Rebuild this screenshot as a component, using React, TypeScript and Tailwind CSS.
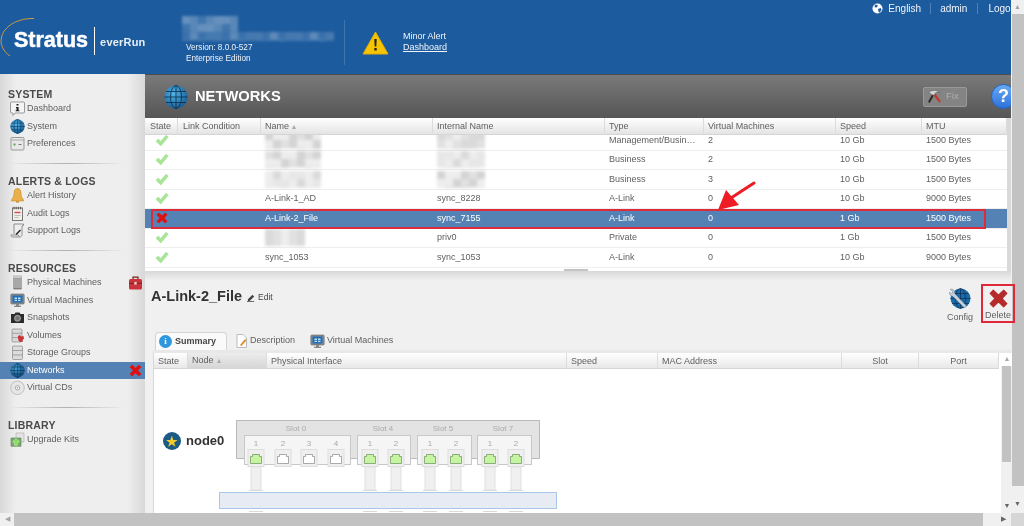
import type { ReactNode } from "react"

const font = "font-['Liberation_Sans',Arial,sans-serif]"

function Globe({ size = 15, dark = false }: { size?: number; dark?: boolean }) {
  return (
    <svg width={size} height={size} viewBox="0 0 24 24" className="flex-none">
      <defs>
        <radialGradient id={dark ? "gd" : "gl"} cx="0.4" cy="0.35" r="0.8">
          <stop offset="0" stopColor={dark ? "#3f9fd6" : "#4fb4e8"} />
          <stop offset="1" stopColor={dark ? "#0c3f6e" : "#0f4f86"} />
        </radialGradient>
      </defs>
      <circle cx="12" cy="12" r="11.5" fill={`url(#${dark ? "gd" : "gl"})`} />
      <g fill="none" stroke="#08243f" strokeWidth="0.9" opacity="0.85">
        <ellipse cx="12" cy="12" rx="5.5" ry="11.5" />
        <path d="M12 .5v23M.5 12h23M2.2 6.5h19.6M2.2 17.5h19.6" />
      </g>
    </svg>
  )
}

function Cross({ size = 14, color = "#e01010" }: { size?: number; color?: string }) {
  return (
    <svg width={size} height={size} viewBox="0 0 16 16" className="flex-none">
      <path d="M2.2 4.4 4.4 2.2 8 5.6l3.6-3.4 2.2 2.2L10.4 8l3.4 3.6-2.2 2.2L8 10.4l-3.6 3.4-2.2-2.2L5.6 8Z" fill={color} stroke={color} strokeWidth="0.8" strokeLinejoin="round" />
    </svg>
  )
}

function Check() {
  return (
    <svg width="14" height="13" viewBox="0 0 14 13" className="flex-none">
      <path d="M1 7.2 3.2 5l2.5 2.4L11 1.2l2.2 1.9L5.8 12Z" fill="#a6e695" stroke="#98dc86" strokeWidth="0.5" strokeLinejoin="round" />
    </svg>
  )
}

const sideIcons: Record<string, ReactNode> = {
  Dashboard: (
    <svg width="15" height="15" viewBox="0 0 15 15">
      <path d="M1.5 1h12a1 1 0 0 1 1 1v9a1 1 0 0 1-1 1H5l-2 2.5V12H1.5a1 1 0 0 1-1-1V2a1 1 0 0 1 1-1Z" fill="#f4f4f4" stroke="#999" />
      <path d="M6.5 3h2v1.600h-2ZM6 6h2.600v3.200h.8v1H5.600v-1h.9V7H6Z" fill="#222" />
    </svg>
  ),
  System: <Globe />,
  Preferences: (
    <svg width="15" height="15" viewBox="0 0 15 15">
      <rect x="1" y="1.5" width="13" height="12.5" rx="1" fill="#e8e8e8" stroke="#999" />
      <path d="M1 4h13" stroke="#aaa" />
      <path d="M8.5 8.5h3" stroke="#777" />
      <rect x="3.5" y="7.5" width="2" height="2" fill="#5aaa50" />
    </svg>
  ),
  "Alert History": (
    <svg width="15" height="15" viewBox="0 0 15 15">
      <path d="M7.500.5c-2.500 0-3.500 2-3.500 4.500 0 3-.8 5-2.500 6.700v1.300h12v-1.300C11.800 10 11 8 11 5c0-2.500-1-4.500-3.500-4.500Z" fill="#e9b04a" stroke="#c98c25" strokeWidth="0.6" />
      <path d="M6 13.300h3V14.500H6Z" fill="#b87c1c" />
    </svg>
  ),
  "Audit Logs": (
    <svg width="15" height="15" viewBox="0 0 15 15">
      <rect x="2.500" y="2" width="10" height="12.500" fill="#f2efe9" stroke="#777" />
      <path d="M4 .8v2.500M6.200.8v2.500M8.400.8v2.500M10.600.8v2.500" stroke="#555" />
      <path d="M4.500 6.500h6" stroke="#d05050" strokeWidth="1.500" />
      <path d="M4.500 9.500h6M4.500 11.500h4" stroke="#bbb" />
    </svg>
  ),
  "Support Logs": (
    <svg width="15" height="15" viewBox="0 0 15 15">
      <path d="M4 1h9.500v1.500L12 3v8.500c0 1.700-1 2.500-2.500 2.500H2.500C1.500 14 1 13 1 12h7.500c0 1 .5 1.500 1 1.500" fill="#eee" stroke="#777" strokeWidth="0.8" />
      <path d="M4 1v9.800" stroke="#777" strokeWidth="0.8" />
      <path d="m5.500 11 4.500-4.500 1 1L6.500 12Z" fill="#222" />
    </svg>
  ),
  "Physical Machines": (
    <svg width="15" height="15" viewBox="0 0 15 15">
      <path d="M3.500.8h8v2.500h-8Z" fill="#d6d6d6" stroke="#999" strokeWidth="0.5" />
      <path d="M3.500 3.300h8v10.200h-8Z" fill="#a8a8a8" stroke="#888" strokeWidth="0.5" />
      <path d="M3.500 13.500h8v.8h-8Z" fill="#555" />
    </svg>
  ),
  "Virtual Machines": (
    <svg width="15" height="15" viewBox="0 0 15 15">
      <rect x="0.800" y="1" width="13.400" height="10" rx="1" fill="#8a8a8a" stroke="#666" strokeWidth="0.6" />
      <rect x="2.500" y="2.500" width="10" height="7" fill="#1e6fb8" />
      <path d="M4.500 4.500h2.500v1.500H4.500ZM8 4.500h2.500v1.500H8ZM4.500 6.800h2.500v1.200H4.500ZM8 6.800h2.500v1.200H8Z" fill="#bfe2fb" />
      <path d="M6 11h3v1.800h2V14H4v-1.200h2Z" fill="#888" />
    </svg>
  ),
  Snapshots: (
    <svg width="15" height="15" viewBox="0 0 15 15">
      <path d="M1 4h3.500l1-1.500h4L10.500 4H14v9H1Z" fill="#2c2c2c" />
      <circle cx="7.500" cy="8.300" r="3" fill="#777" stroke="#ccc" strokeWidth="0.7" />
    </svg>
  ),
  Volumes: (
    <svg width="15" height="15" viewBox="0 0 15 15">
      <rect x="2" y="1" width="10" height="13" rx="1" fill="#d9d9d9" stroke="#888" strokeWidth="0.7" />
      <path d="M2 5.300h10M2 9.600h10" stroke="#888" strokeWidth="0.7" />
      <path d="m8 8 2-1 1 1.500L13.500 8l.5 3-1.500.5.500 2L10 14l-1.500-1.500L8 10Z" fill="#c8323a" />
    </svg>
  ),
  "Storage Groups": (
    <svg width="15" height="15" viewBox="0 0 15 15">
      <rect x="2.500" y="1" width="10" height="13.500" rx="1" fill="#dcdcdc" stroke="#888" strokeWidth="0.7" />
      <path d="M2.500 5.500h10M2.500 10h10" stroke="#888" strokeWidth="0.7" />
    </svg>
  ),
  Networks: <Globe dark />,
  "Virtual CDs": (
    <svg width="15" height="15" viewBox="0 0 15 15">
      <circle cx="7.500" cy="7.800" r="6.800" fill="#e6e6e6" stroke="#aaa" strokeWidth="0.7" />
      <circle cx="7.500" cy="7.800" r="2.200" fill="#fafafa" stroke="#888" strokeWidth="0.7" />
      <circle cx="7.500" cy="7.800" r="0.700" fill="#888" />
    </svg>
  ),
  "Upgrade Kits": (
    <svg width="15" height="15" viewBox="0 0 15 15">
      <path d="M6 1h8v9H6Z" fill="#e4e4e4" stroke="#aaa" strokeWidth="0.6" />
      <path d="M1 6h10v8.300H1Z" fill="#7aa86a" stroke="#5c8850" strokeWidth="0.6" />
      <path d="M6 6.500 9.500 10H7.400v3.300H4.600V10H2.500Z" fill="#7ee04f" stroke="#fff" strokeWidth="0.4" />
    </svg>
  ),
}

function Toolbox() {
  return (
    <svg width="15" height="14" viewBox="0 0 15 14" className="flex-none">
      <path d="M5 3V1.200h5V3" fill="none" stroke="#7a2020" strokeWidth="1.200" />
      <rect x="1" y="3" width="13" height="10.500" rx="1.500" fill="#c9343a" />
      <path d="M1 7.300h13" stroke="#8b1c20" />
      <rect x="6.300" y="6" width="2.400" height="2.600" fill="#f1d0d0" />
    </svg>
  )
}

const sections = [
  { title: "SYSTEM", items: ["Dashboard", "System", "Preferences"] },
  { title: "ALERTS & LOGS", items: ["Alert History", "Audit Logs", "Support Logs"] },
  {
    title: "RESOURCES",
    items: ["Physical Machines", "Virtual Machines", "Snapshots", "Volumes", "Storage Groups", "Networks", "Virtual CDs"],
  },
  { title: "LIBRARY", items: ["Upgrade Kits"] },
]

function Sidebar() {
  return (
    <aside className="w-[145px] flex-none bg-[linear-gradient(90deg,#d8d8d8,#eeeeee_11%,#eeeeee_88%,#d8d8d8)] pt-[15px]">
      {sections.map((section, i) => (
        <div key={section.title}>
          {i > 0 && (
            <div className="mt-[10.500px] mb-[12px] ml-[8px] mr-[20px] h-px bg-gradient-to-r from-transparent via-[#b0b0b0] to-transparent" />
          )}
          <div className="h-[11px] pl-[8px] text-[10.500px] leading-[11px] font-bold tracking-[0.2px] text-[#4a4a4a]">
            {section.title}
          </div>
          {section.items.map((item) => {
            const active = item === "Networks"
            return (
              <div
                key={item}
                className={`flex h-[17.500px] items-center gap-[2px] pl-[10px] pr-[2px] text-[9px] ${active ? "bg-[#5582b4] text-white" : "text-[#5f5f5f]"}`}
              >
                <span className="flex w-[15px] flex-none justify-center">{sideIcons[item]}</span>
                <span className="flex-1">{item}</span>
                {item === "Physical Machines" && <Toolbox />}
                {active && <Cross size={15} />}
              </div>
            )
          })}
        </div>
      ))}
    </aside>
  )
}

// pixelated patch that hides a name in the screenshot
function Mosaic({ w, h, seed = 1, color = "#000", base = 0.1, cell = 8 }: { w: number; h: number; seed?: number; color?: string; base?: number; cell?: number }) {
  const cols = Math.ceil(w / cell)
  const rows = Math.ceil(h / cell)
  const cells = Array.from({ length: cols * rows }, (_, i) => ((i * 7 + seed * 13) * (i + 3)) % 5)
  return (
    <div className="flex flex-wrap overflow-hidden blur-[1.500px]" style={{ width: cols * cell, height: h }}>
      {cells.map((v, i) => (
        <div key={i} style={{ width: cell, height: cell, background: color, opacity: base + v * base * 0.35 }} />
      ))}
    </div>
  )
}

function Header() {
  return (
    <header className="flex h-[74px] flex-none flex-col overflow-hidden bg-[#1c5b9e] text-[#f0f4f8]">
      <div className="-mr-[8px] flex h-[16px] flex-none items-center justify-end text-[10px]">
        <svg width="11" height="11" viewBox="0 0 12 12" className="mr-[5px]">
          <circle cx="6" cy="6" r="5.500" fill="#fff" />
          <path d="M3 2c1.500-.5 3 0 3.500 1L5 5 3 4.500ZM6.500 6.500l3-1 1 2-2.500 3L7 9Z" fill="#1c5b9e" />
        </svg>
        <span>English</span>
        <span className="mx-[9px] h-[11px] w-px bg-[#4d82b8]" />
        <span>admin</span>
        <span className="mx-[10px] h-[11px] w-px bg-[#4d82b8]" />
        <span>Logout</span>
      </div>
      <div className="flex flex-1">
        <div className="relative w-[182px] flex-none">
          <svg width="40" height="42" viewBox="0 0 40 42" className="absolute left-0 top-[1px]">
            <path d="M34 1.500C18 1 3 9 1.200 22 .5 28 3 34 10 39" fill="none" stroke="#d09a3c" strokeWidth="1" />
          </svg>
          <div className="flex h-[49px] items-center pl-[14px]">
            <span className="text-[21.500px] font-bold text-white [-webkit-text-stroke:0.5px_white]">Stratus</span>
            <span className="ml-[6px] mr-[5px] h-[28px] w-px bg-white" />
            <span className="mt-[3px] text-[11px] font-bold tracking-[0.2px] text-[#e8eef5]">everRun</span>
          </div>
        </div>
        <div className="w-[162px] flex-none">
          <Mosaic w={50} h={16} seed={2} color="#fff" base={0.16} />
          <Mosaic w={145} h={9} seed={5} color="#fff" base={0.14} />
          <div className="mt-[1px] pl-[4px] text-[8.200px] leading-[11px]">
            <div>Version: 8.0.0-527</div>
            <div>Enterprise Edition</div>
          </div>
        </div>
        <div className="mt-[4px] h-[45px] w-px flex-none bg-[#3e75ad]" />
        <div className="ml-[17px] flex items-start">
          <svg width="27" height="24" viewBox="0 0 27 24" className="mt-[15px]">
            <path d="M13.500 1 26 23H1Z" fill="#f7c402" stroke="#e3ad00" strokeLinejoin="round" />
            <path d="M12.300 8h2.400l-.4 7.500h-1.600ZM12.300 17h2.400v2.500h-2.400Z" fill="#222" />
          </svg>
          <div className="ml-[14px] mt-[15px] text-[9px] leading-[11px]">
            <div>Minor Alert</div>
            <div className="underline">Dashboard</div>
          </div>
        </div>
      </div>
    </header>
  )
}

function PageTitle() {
  return (
    <div className="flex h-[44px] flex-none items-center overflow-hidden border-t border-[#4d4d4d] bg-gradient-to-b from-[#7a7a7a] to-[#565656] pl-[19px]">
      <Globe size={24} />
      <h1 className="ml-[7px] flex-1 text-[14.700px] font-bold text-white">NETWORKS</h1>
      <div className="flex h-[20px] w-[44px] items-center gap-[4px] rounded-[2px] border border-[#999999] bg-[#848484] pl-[3px] text-[9.500px] text-[#aeaeae]">
        <svg width="15" height="15" viewBox="0 0 14 14">
          <path d="M7.500 4 13 11.500l-1.500 1.300L5.800 5.500Z" fill="#c0392b" />
          <path d="M7 5 2.500 13 1 12l4.500-8Z" fill="#2a2a2a" />
          <path d="M1.500 3.500C3.500 1 8 .5 12 3 9 2.500 7.500 3.500 6.500 6L4 5C3.500 4 2.500 3.500 1.500 3.500Z" fill="#d4d4d4" stroke="#555" strokeWidth="0.4" />
        </svg>
        Fix
      </div>
      <div className="-mr-[5px] ml-[24px] flex size-[25px] flex-none items-center justify-center rounded-full border border-[#2466c4] bg-gradient-to-b from-[#6aa8f0] to-[#2d72dc] text-[18px] font-bold text-white">
        ?
      </div>
    </div>
  )
}

const gridCols = "grid-cols-[33px_83px_172px_172px_99px_132px_86px_85px]"

const headings = ["State", "Link Condition", "Name", "Internal Name", "Type", "Virtual Machines", "Speed", "MTU"]

const networks = [
  { seedA: 1, seedB: 2, type: "Management/Busin…", vms: "2", speed: "10 Gb", mtu: "1500 Bytes", hidden: true },
  { seedA: 3, seedB: 4, type: "Business", vms: "2", speed: "10 Gb", mtu: "1500 Bytes", hidden: true },
  { seedA: 5, seedB: 6, type: "Business", vms: "3", speed: "10 Gb", mtu: "1500 Bytes", hidden: true },
  { name: "A-Link-1_AD", internal: "sync_8228", type: "A-Link", vms: "0", speed: "10 Gb", mtu: "9000 Bytes" },
  { name: "A-Link-2_File", internal: "sync_7155", type: "A-Link", vms: "0", speed: "1 Gb", mtu: "1500 Bytes", selected: true },
  { seedA: 7, internal: "priv0", type: "Private", vms: "0", speed: "1 Gb", mtu: "1500 Bytes" },
  { name: "sync_1053", internal: "sync_1053", type: "A-Link", vms: "0", speed: "10 Gb", mtu: "9000 Bytes" },
]

function NetworkTable() {
  return (
    <div className="relative h-[153px] flex-none border-r-[4px] border-[#d9d9d9] bg-white text-[9px] text-[#5f5f5f]">
      <div className={`relative z-10 grid h-[17px] ${gridCols} border-b border-[#d5d5d5] bg-gradient-to-b from-white to-[#e4e4e4] leading-[17px]`}>
        {headings.map((label, i) => (
          <div key={label} className={`border-r border-[#dcdcdc] whitespace-nowrap ${i < 2 ? "pl-[5px]" : "pl-[4px]"}`}>
            {label}
            {label === "Name" && <span className="ml-[3px] text-[8px] text-[#aaaaaa]">▴</span>}
          </div>
        ))}
      </div>
      <div className="h-[132.500px] overflow-hidden">
        {networks.map((row, i) => (
          <div
            key={i}
            className={`grid h-[19.500px] ${gridCols} items-center border-b border-[#eeeeee] ${i === 0 ? "-mt-[4px]" : ""} ${row.selected ? "bg-[#5582b4] text-white" : ""}`}
          >
            <div className="flex justify-center">{row.selected ? <Cross /> : <Check />}</div>
            <div />
            <div className="pl-[4px]">
              {row.name ?? (row.seedA ? <Mosaic w={row.hidden ? 50 : 40} h={17} seed={row.seedA} base={0.07} /> : null)}
            </div>
            <div className="pl-[4px]">
              {row.internal ?? (row.seedB ? <Mosaic w={48} h={17} seed={row.seedB} base={0.07} /> : null)}
            </div>
            <div className="pl-[4px] whitespace-nowrap">{row.type}</div>
            <div className="pl-[4px]">{row.vms}</div>
            <div className="pl-[4px]">{row.speed}</div>
            <div className="pl-[4px]">{row.mtu}</div>
          </div>
        ))}
      </div>
      <div className="mx-auto mt-px h-[3px] w-[24px] bg-[#c4c4c4]" />

      <div className="absolute left-[6px] top-[91px] z-20 h-[20px] w-[835px] border-[2px] border-[#dc2c3c]" />
      <svg width="40" height="32" viewBox="0 0 40 32" className="absolute left-[572px] top-[62px] z-20">
        <path d="M37 3 14 18" stroke="#ee1c25" strokeWidth="3" strokeLinecap="round" />
        <path d="M1 30 9 10l13 15Z" fill="#ee1c25" />
      </svg>
    </div>
  )
}

const detailColumns = [
  { label: "State", cls: "w-[34px] text-left" },
  { label: "Node", cls: "w-[79px] text-left bg-gradient-to-b from-[#eeeeee] to-[#d4d4d4]", sorted: true },
  { label: "Physical Interface", cls: "w-[300px] text-left" },
  { label: "Speed", cls: "w-[91px] text-left" },
  { label: "MAC Address", cls: "w-[184px] text-left" },
  { label: "Slot", cls: "w-[77px] text-center" },
  { label: "Port", cls: "w-[80px] text-center" },
]

function Detail() {
  return (
    <section className="relative flex min-h-0 flex-1 flex-col bg-gradient-to-b from-[#d8d8d8] via-[#f0f0f0] via-[4%] to-[#f0f0f0] pl-[8px] text-[9px] text-[#5f5f5f]">
      <div className="flex h-[61px] flex-none items-start">
        <div className="mt-[16px] -ml-[2px] flex flex-1 items-center">
          <h2 className="text-[14.500px] font-bold leading-[18px] text-[#333]">A-Link-2_File</h2>
          <svg width="9" height="9" viewBox="0 0 10 10" className="ml-[5px] mt-[3px]">
            <path d="m1 7 5-5 2 2-5 5H1ZM0 9.300h8v.7H0Z" fill="#444" />
          </svg>
          <span className="ml-[2px] mt-[2px] text-[8.500px] text-[#444]">Edit</span>
        </div>
        <div className="mt-[17px] flex w-[26px] flex-none flex-col items-center">
          <svg width="22" height="21" viewBox="0 0 22 21">
            <circle cx="11.500" cy="10.500" r="10" fill="#1b6aa8" />
            <g stroke="#0b2f52" strokeWidth="0.7" fill="none">
              <ellipse cx="11.500" cy="10.500" rx="5" ry="10" />
              <path d="M1.500 10.500h20M3 5.500h17M3 15.500h17M11.500.5v20" />
            </g>
            <path d="M1 1.500c2-1 4 0 4.500 2 .3 1 0 1.800 0 1.800L16 16.500c1 .8 1.500 1.500.8 2.500-.8 1-1.800.5-2.500-.2L3.500 8C1.500 8 0 6.500 0 4l2.500 1.500 1.500-1L2.500 2Z" fill="#c9d3dc" stroke="#667" strokeWidth="0.4" />
          </svg>
          <span className="mt-[2px] text-[9px]">Config</span>
        </div>
        <div className="ml-[11px] -mr-px mt-[16px] flex w-[28px] flex-none flex-col items-center">
          <Cross size={23} color="#b52a2a" />
          <span className="mt-[-1px] text-[9px]">Delete</span>
        </div>
      </div>

      <div className="flex h-[18px] flex-none items-end gap-[8px] pl-[2px] text-[9px]">
        <div className="flex h-[18px] w-[72px] items-center gap-[3px] rounded-t-[4px] border border-b-0 border-[#d4d4d4] bg-[#fafafa] pl-[3px] font-bold text-[#444]">
          <span className="flex size-[13px] items-center justify-center rounded-full bg-[#2f97dc] font-['Liberation_Serif',serif] text-[9px] text-white">i</span>
          Summary
        </div>
        <div className="flex h-[18px] w-[62px] items-center gap-[2px]">
          <svg width="13" height="14" viewBox="0 0 13 14">
            <path d="M2 .5h6l3.500 3.500v9.500H2Z" fill="#fff" stroke="#bbb" />
            <path d="m5 11 5-6 1.500 1.200L6.500 12Z" fill="#d89030" />
          </svg>
          Description
        </div>
        <div className="flex h-[18px] items-center gap-[2px] pl-[5px]">
          {sideIcons["Virtual Machines"]}
          Virtual Machines
        </div>
      </div>

      <div className="h-[3px] flex-none bg-[#e8e8e8]" />
      <div className="flex min-h-0 flex-1 border-l border-[#d8d8d8]">
        <div className="w-[845px] flex-none overflow-hidden bg-white">
          <div className="flex h-[16px] items-center border-b border-[#d5d5d5] bg-gradient-to-b from-white to-[#e8e8e8] leading-[16px]">
            {detailColumns.map(({ label, cls, sorted }) => (
              <div key={label} className={`${cls} flex-none border-r border-[#dcdcdc] px-[4px] whitespace-nowrap`}>
                {label}
                {sorted && <span className="ml-[3px] text-[8px] text-[#aaaaaa]">▴</span>}
              </div>
            ))}
          </div>
          <div className="flex pt-[46px]">
            <div className="ml-[9px] mt-[16px] flex h-[20px] w-[56px] flex-none items-center gap-[5px] whitespace-nowrap text-[13px] font-bold text-[#333]">
              <span className="flex size-[18px] flex-none items-center justify-center rounded-full bg-[#1c5b84] text-[13px] leading-none text-[#f7cc2a]">★</span>
              node0
            </div>
            <PortDiagram />
          </div>
        </div>
        <div className="flex w-[13px] flex-none flex-col bg-white">
          <div className="flex h-[13px] flex-none items-center justify-center pl-[3px] text-[7px] text-[#aaaaaa]">▲</div>
          <div className="ml-[2px] flex min-h-0 flex-1 flex-col bg-[#f0f0f0] pl-px">
            <div className="mr-px h-[96px] flex-none bg-[#c2c2c2]" />
            <div className="mt-auto flex h-[13px] flex-none items-center justify-center text-[7px] text-[#666666]">▼</div>
          </div>
        </div>
      </div>

      <div className="absolute -right-[4px] top-[13px] z-20 h-[39px] w-[34px] border-[2px] border-[#e0283a]" />
    </section>
  )
}

const slots = [
  { label: "Slot 0", x: 244, w: 106, labelX: 296, ports: [{ n: 1, x: 256, up: true }, { n: 2, x: 283 }, { n: 3, x: 309 }, { n: 4, x: 336 }] },
  { label: "Slot 4", x: 357, w: 53, labelX: 383, ports: [{ n: 1, x: 370, up: true }, { n: 2, x: 396, up: true }] },
  { label: "Slot 5", x: 417, w: 54, labelX: 443, ports: [{ n: 1, x: 430, up: true }, { n: 2, x: 456, up: true }] },
  { label: "Slot 7", x: 477, w: 54, labelX: 503, ports: [{ n: 1, x: 490, up: true }, { n: 2, x: 516, up: true }] },
]

function PortDiagram() {
  return (
    <svg width="338" height="98" viewBox="219 415 338 98" className="flex-none" fontFamily="'Liberation Sans', Arial, sans-serif">
      <rect x="236.500" y="420.500" width="303" height="38" fill="#e3e3e3" stroke="#b9b9b9" />
      {slots.map((slot) => (
        <g key={slot.label}>
          <text x={slot.labelX} y="431" fontSize="8" fill="#aaa" textAnchor="middle">{slot.label}</text>
          <rect x={slot.x + 0.5} y="435.500" width={slot.w} height="29" fill="#f5f5f5" stroke="#c8c8c8" />
          {slot.ports.map((port) => (
            <g key={port.n}>
              <text x={port.x} y="446" fontSize="8" fill="#aaa" textAnchor="middle">{port.n}</text>
              <rect x={port.x - 8} y="449.500" width="16" height="17" fill="#efefef" stroke="#dddddd" />
              {port.up && (
                <>
                  <rect x={port.x - 5} y="467" width="10" height="23" fill="#f0f0f0" stroke="#e0e0e0" />
                  <rect x={port.x - 7} y="490" width="14" height="1" fill="#d8d8d8" />
                  <rect x={port.x - 7} y="511" width="14" height="1" fill="#d8d8d8" />
                </>
              )}
              <path
                d={`M${port.x - 5.5} 463.500v-7h2v-2h7v2h2v7Z`}
                fill={port.up ? "#c6f5a2" : "#fff"}
                stroke={port.up ? "#6a8f5a" : "#888"}
                strokeWidth="0.7"
              />
            </g>
          ))}
        </g>
      ))}
      <rect x="219.500" y="492.500" width="337" height="16" fill="#e6ebf4" stroke="#a9c7e8" />
    </svg>
  )
}

export default function App() {
  return (
    <div className={`flex h-[526px] w-[1024px] flex-col overflow-hidden bg-white blur-[0.35px] ${font}`}>
      <div className="flex min-h-0 flex-1">
        <div className="relative z-10 flex w-[1011px] flex-none flex-col">
          <Header />
          <div className="flex min-h-0 flex-1">
            <Sidebar />
            <main className="flex min-w-0 flex-1 flex-col">
              <PageTitle />
              <NetworkTable />
              <Detail />
            </main>
          </div>
        </div>
        <div className="flex w-[13px] flex-none flex-col bg-[#f0f0f0]">
          <div className="flex h-[14px] flex-none items-center justify-center text-[7px] text-[#a3a3a3]">▲</div>
          <div className="ml-px h-[472px] flex-none bg-[#c2c2c2]" />
          <div className="mt-auto flex h-[17px] flex-none items-center justify-center text-[7px] text-[#666666]">▼</div>
        </div>
      </div>
      <div className="flex h-[13px] flex-none bg-[#f0f0f0]">
        <div className="flex w-[14px] flex-none items-center justify-center text-[7px] text-[#a3a3a3]">◀</div>
        <div className="w-[969px] flex-none bg-[#c2c2c2]" />
        <div className="flex w-[28px] flex-none items-center justify-end pr-[5px] text-[7px] text-[#666666]">▶</div>
        <div className="w-[13px] flex-none bg-[#d6d6d6]" />
      </div>
    </div>
  )
}
